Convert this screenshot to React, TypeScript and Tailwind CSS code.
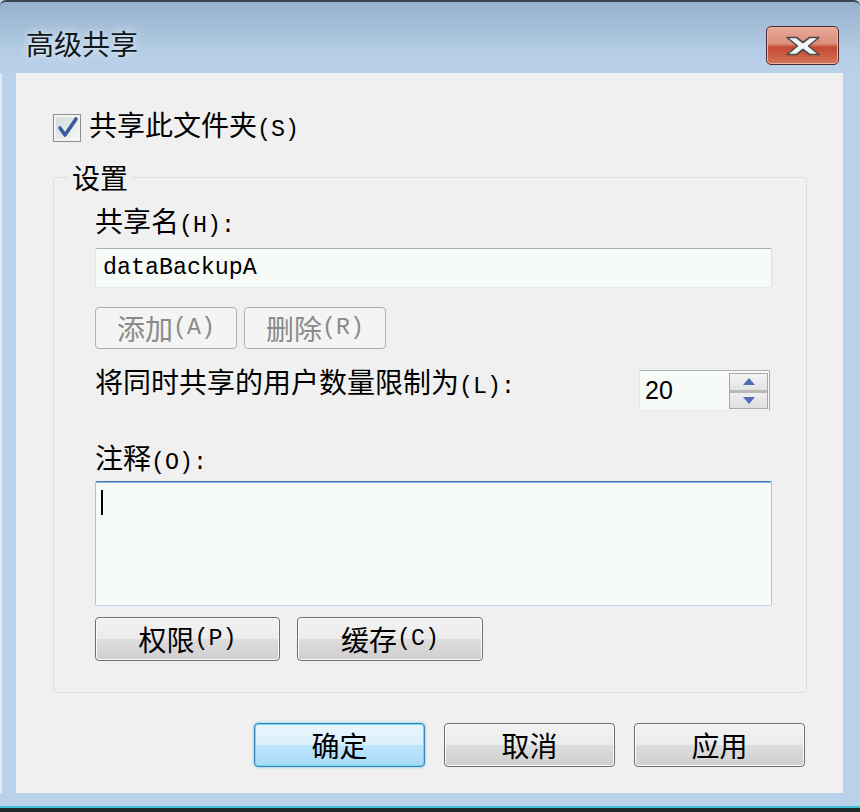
import React from 'react';

const cjk = "font-['Noto_Sans_CJK_SC',sans-serif]";

// mnemonic like (S), drawn half-width like the system font
function Key({ children }: { children: React.ReactNode }) {
  return <span className="font-['Liberation_Mono',monospace] text-[23.3px]">{children}</span>;
}

interface BtnProps {
  children: React.ReactNode;
  className: string;
  variant?: 'normal' | 'disabled' | 'primary';
}

function Btn({ children, className, variant = 'normal' }: BtnProps) {
  const look =
    variant === 'disabled'
      ? 'border-[#adb2b5] bg-[#f4f4f4] text-[#8a8a8a]'
      : variant === 'primary'
        ? 'border-[#3c7fb1] bg-[linear-gradient(to_bottom,#eaf6fd_0%,#d9f0fc_50%,#bee6fd_51%,#a7d9f5_100%)] shadow-[inset_0_0_0_1px_#6fd6f8,0_0_3px_#57c6f0] text-black'
        : 'border-[#707070] bg-[linear-gradient(to_bottom,#f2f2f2_0%,#ebebeb_50%,#dddddd_51%,#cfcfcf_100%)] shadow-[inset_0_0_0_1px_#fbfbfb] text-black';
  return (
    <div
      className={`flex items-center justify-center rounded-[4px] border text-[28px] leading-[30px] ${look} ${className}`}
    >
      {children}
    </div>
  );
}

function CheckBox() {
  return (
    <div className="w-[28px] h-[28px] border border-[#8e8f8f] bg-[linear-gradient(135deg,#d4d9de,#f7f7f7)] shadow-[inset_0_0_0_2px_#f4f4f4]">
      <svg width="26" height="26" viewBox="0 0 26 26">
        <path
          d="M6 13 L11 20 L22 4"
          fill="none"
          stroke="#3a5a9e"
          strokeWidth="3.6"
          strokeLinejoin="round"
          strokeLinecap="round"
        />
      </svg>
    </div>
  );
}

function Spinner() {
  return (
    <div className="flex w-[131px] h-[41px] border border-[#abadb3] border-b-[#e3e9ef] border-l-[#e2e3ea] bg-[#f7fbf7] mr-[2px]">
      <div className="flex-1 pl-[5px] flex items-center font-['Liberation_Sans',sans-serif] text-[25px] text-black">
        20
      </div>
      <div className="w-[39px] flex flex-col mt-[2px] mb-[1px] mr-[1px] border border-[#a7a7a7] bg-[#e6e6e6]">
        <div className="flex-1 flex items-center justify-center bg-[linear-gradient(to_bottom,#f4f4f4,#e2e2e2)] border-b-[3px] border-[#b9b9b9]">
          <svg width="12" height="7" viewBox="0 0 12 7">
            <path d="M6 0 L12 7 L0 7 Z" fill="#4f6cb8" />
          </svg>
        </div>
        <div className="flex-1 flex items-center justify-center bg-[linear-gradient(to_bottom,#f0f0f0,#dedede)]">
          <svg width="12" height="7" viewBox="0 0 12 7">
            <path d="M0 0 L12 0 L6 7 Z" fill="#4f6cb8" />
          </svg>
        </div>
      </div>
    </div>
  );
}

export default function App() {
  return (
    <div className={`w-[860px] h-[812px] flex flex-col bg-[#bad1ea] ${cjk}`}>
      {/* title bar */}
      <div className="h-[73px] flex items-start border-t-2 border-[#3e464d] rounded-t-[6px] bg-[linear-gradient(to_bottom,#98b2cd,#b4cce5_70%,#bad1ea)] pt-[24px] pl-[26px] pr-[21px]">
        <div className="text-[28px] leading-[30px] mt-[2px] text-[#101820] [text-shadow:0_0_8px_#ffffff]">高级共享</div>
        <div className="ml-auto w-[73px] h-[39px] rounded-[5px] border border-[#4c2a31] bg-[linear-gradient(to_bottom,#eaa999_0%,#dc8e7c_45%,#c44a30_55%,#d4735b_100%)] shadow-[inset_0_0_0_1px_#efb4a6] flex items-center justify-center">
          <svg width="38" height="20" viewBox="0 0 38 20">
            <path
              d="M3 1.5 L12.5 1.5 L19 6.5 L25.5 1.5 L35 1.5 L24.5 10 L35 18.5 L25.5 18.5 L19 13.5 L12.5 18.5 L3 18.5 L13.5 10 Z"
              fill="#f4f4f4"
              stroke="#4a4a4a"
              strokeWidth="1.6"
              strokeLinejoin="round"
            />
          </svg>
        </div>
      </div>

      {/* client area */}
      <div className="h-[720px] pl-[16px] shadow-[inset_2px_0_0_#e2ebf5]">
        <div className="w-[827px] h-full bg-[#f0f0f0] text-black">
          <div className="pt-[41px] pl-[37px] flex items-center gap-[8px] h-[69px]">
            <CheckBox />
            <span className="text-[28px] leading-[30px] mt-[-2px]">
              共享此文件夹<Key>(S)</Key>
            </span>
          </div>

          <fieldset className="mt-[20px] ml-[37px] w-[754px] border border-[#d5dfe5] rounded-[4px] px-0 pb-[31px]">
            <legend className="ml-[13px] px-[5px] text-[28px] leading-[30px] mt-[-2px]">设置</legend>
            <div className="pt-[13px] pl-[41px] pr-[34px] flex flex-col">
              <div className="text-[28px] leading-[30px] h-[30px]">
                共享名<Key>(H):</Key>
              </div>
              <div className="mt-[13px] h-[40px] border border-[#abadb3] border-l-[#e2e3ea] border-r-[#dbdfe6] border-b-[#e3e9ef] rounded-[2px] bg-[#f7fbf7] flex items-center pl-[7px] font-['Liberation_Mono',monospace] text-[23.3px]">
                dataBackupA
              </div>
              <div className="mt-[19px] flex gap-[7px]">
                <Btn variant="disabled" className="w-[142px] h-[42px]">
                  添加<Key>(A)</Key>
                </Btn>
                <Btn variant="disabled" className="w-[142px] h-[42px]">
                  删除<Key>(R)</Key>
                </Btn>
              </div>
              <div className="mt-[21px] flex items-start">
                <div className="text-[28px] leading-[30px] mt-[-4px]">
                  将同时共享的用户数量限制为<Key>(L):</Key>
                </div>
                <div className="ml-auto">
                  <Spinner />
                </div>
              </div>
              <div className="mt-[31px] text-[28px] leading-[30px] h-[30px]">
                注释<Key>(O):</Key>
              </div>
              <div className="mt-[9px] h-[125px] border border-[#a4c9e3] border-t-[#3c7bb0] border-b-[#b7d9ed] shadow-[inset_0_1px_0_#8fb8dc] rounded-[2px] bg-[#f7fbf7]">
                <div className="ml-[5px] mt-[8px] w-[2px] h-[25px] bg-black" />
              </div>
              <div className="mt-[11px] flex gap-[17px]">
                <Btn className="w-[185px] h-[44px]">
                  权限<Key>(P)</Key>
                </Btn>
                <Btn className="w-[186px] h-[44px]">
                  缓存<Key>(C)</Key>
                </Btn>
              </div>
            </div>
          </fieldset>

          <div className="mt-[30px] flex justify-end gap-[19px] pr-[38px]">
            <Btn variant="primary" className="w-[171px] h-[44px]">确定</Btn>
            <Btn className="w-[171px] h-[44px]">取消</Btn>
            <Btn className="w-[171px] h-[44px]">应用</Btn>
          </div>
        </div>
      </div>

      {/* bottom frame */}
      <div className="h-[13px]" />
      <div className="h-[2px] bg-[#3ec1d4]" />
      <div className="h-[4px] bg-[#1e2a2c]" />
    </div>
  );
}
